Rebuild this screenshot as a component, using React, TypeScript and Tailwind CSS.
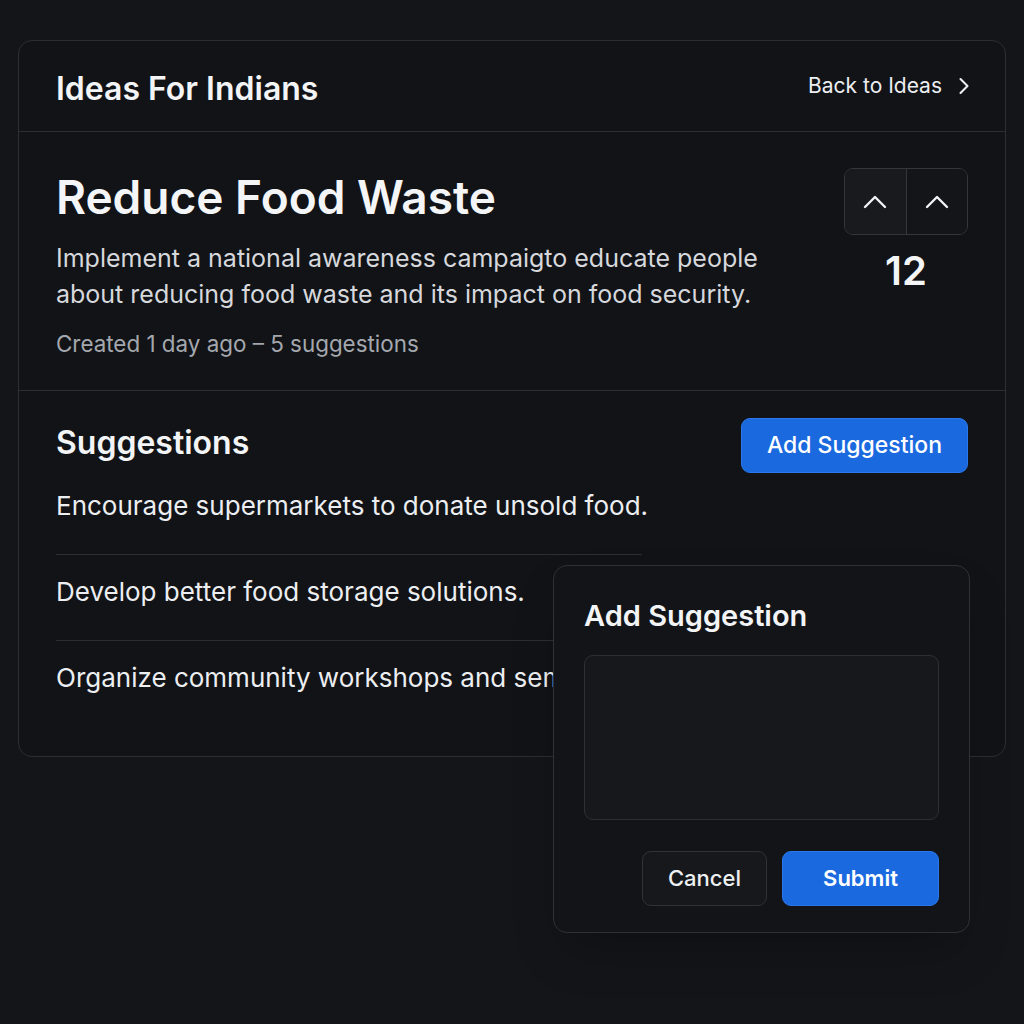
import {ChevronRight} from "lucide-react";

const suggestions = [
  "Encourage supermarkets to donate unsold food.",
  "Develop better food storage solutions.",
  "Organize community workshops and seminars.",
];

const font = {fontFamily: "Inter, 'Noto Sans', sans-serif"};

const UpArrow = () => (
  <svg width="24" height="14" viewBox="0 0 24 14" fill="none" stroke="currentColor" strokeWidth="2.4" strokeLinecap="round" strokeLinejoin="round">
    <path d="M2 12 12 2l10 10"/>
  </svg>
);

const VoteBox = () => (
  <div className="flex flex-col items-center">
    <div className="flex h-[67px] w-[124px] overflow-hidden rounded-[9px] border border-[#33363b]">
      <button className="flex flex-1 items-center justify-center bg-[#181a1e] text-[#f1f2f4]">
        <UpArrow/>
      </button>
      <div className="w-px bg-[#33363b]"/>
      <button className="flex flex-1 items-center justify-center bg-[#131519] text-[#f1f2f4]">
        <UpArrow/>
      </button>
    </div>
    <div className="mt-[16px] text-[40px] font-semibold leading-none text-[#f4f5f7]">12</div>
  </div>
);

const AddSuggestionModal = () => (
  <div className="absolute left-[553px] top-[565px] w-[417px] rounded-[14px] border border-[#2e3136] bg-[#121418] px-[30px] pb-[26px] pt-[30px] shadow-2xl">
    <h3 className="text-[29px] font-semibold leading-[40px] text-[#f3f4f6]">Add Suggestion</h3>
    <textarea
      className="mt-[19px] block h-[165px] w-full resize-none rounded-[9px] border border-[#2c2f34] bg-[#16181c] outline-none"
    />
    <div className="mt-[31px] flex justify-end gap-[15px]">
      <button className="h-[55px] w-[125px] rounded-[9px] border border-[#2f3237] bg-[#16181c] text-[22px] font-medium text-[#eef0f2]">
        Cancel
      </button>
      <button className="h-[55px] w-[157px] rounded-[9px] border border-[#2a78ec] bg-[#1a69df] text-[22px] font-semibold text-white">
        Submit
      </button>
    </div>
  </div>
);

export default function App() {
  return (
    <div className="relative min-h-[1024px] w-full bg-[#131519] pt-[40px]" style={font}>
      <div className="ml-[18px] w-[988px] rounded-[14px] border border-[#2b2e33] bg-[#111317]">
        <div className="flex h-[91px] items-center justify-between border-b border-[#2b2e33] px-[37px]">
          <h1 className="mt-[5px] text-[32px] font-semibold text-[#f3f4f6]">Ideas For Indians</h1>
          <a href="#" className="flex items-center gap-[8px] text-[21px] text-[#eceef1]">
            Back to Ideas
            <ChevronRight size={28} strokeWidth={1.8} className="-mr-[10px]"/>
          </a>
        </div>

        <div className="flex justify-between border-b border-[#2b2e33] px-[37px] pb-[31px] pt-[36px]">
          <div>
            <h2 className="text-[46px] font-semibold leading-[58px] text-[#f4f5f7]">Reduce Food Waste</h2>
            <p className="mt-[14px] w-[740px] text-[25px] leading-[36px] text-[#d6d8dc]">
              Implement a national awareness campaigto educate people about reducing food waste and its impact on food security.
            </p>
            <p className="mt-[17px] text-[22.4px] leading-[30px] text-[#a4a8ae]">Created 1 day ago – 5 suggestions</p>
          </div>
          <VoteBox/>
        </div>

        <div className="px-[37px] pb-[63px] pt-[27px]">
          <div className="flex items-center justify-between">
            <h2 className="-mt-[6px] text-[32px] font-semibold leading-[44px] text-[#f3f4f6]">Suggestions</h2>
            <button className="h-[55px] w-[227px] rounded-[9px] border border-[#2a78ec] bg-[#1a69df] text-[23px] font-medium text-white">
              Add Suggestion
            </button>
          </div>
          <ul className="w-[586px] divide-y divide-[#2b2e33]">
            {suggestions.map((s) => (
              <li key={s} className="whitespace-nowrap pb-[33px] pt-[22px] text-[26px] leading-[30px] text-[#eceef1] first:pt-[18px] last:pb-0">
                {s}
              </li>
            ))}
          </ul>
        </div>
      </div>
      <AddSuggestionModal/>
    </div>
  );
}
